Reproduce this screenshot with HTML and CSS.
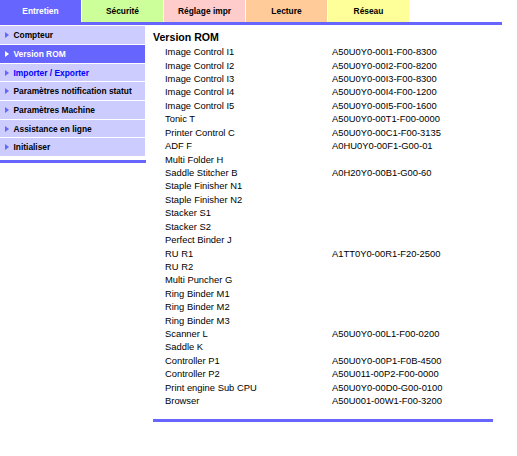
FILE: index.html
```html
<!DOCTYPE html>
<html>
<head>
<meta charset="utf-8">
<link rel="stylesheet" href="styles.css">
</head>
<body>
<div class="tabs">
  <div class="tab t-entretien">Entretien</div>
  <div class="tab t-securite">Sécurité</div>
  <div class="tab t-reglage">Réglage impr</div>
  <div class="tab t-lecture">Lecture</div>
  <div class="tab t-reseau">Réseau</div>
</div>
<div class="topline"></div>
<div class="main">
  <div class="sidebar">
    <div class="menu">
      <div class="item"><span class="arrow"></span>Compteur</div>
      <div class="item selected"><span class="arrow"></span>Version ROM</div>
      <div class="item link"><span class="arrow"></span>Importer / Exporter</div>
      <div class="item"><span class="arrow"></span>Paramètres notification statut</div>
      <div class="item"><span class="arrow"></span>Paramètres Machine</div>
      <div class="item"><span class="arrow"></span>Assistance en ligne</div>
      <div class="item"><span class="arrow"></span>Initialiser</div>
    </div>
    <div class="sideline"></div>
  </div>
  <div class="content">
    <h1 class="title">Version ROM</h1>
    <table class="rom">
      <tr><td class="name">Image Control I1</td><td>A50U0Y0-00I1-F00-8300</td></tr>
      <tr><td class="name">Image Control I2</td><td>A50U0Y0-00I2-F00-8200</td></tr>
      <tr><td class="name">Image Control I3</td><td>A50U0Y0-00I3-F00-8300</td></tr>
      <tr><td class="name">Image Control I4</td><td>A50U0Y0-00I4-F00-1200</td></tr>
      <tr><td class="name">Image Control I5</td><td>A50U0Y0-00I5-F00-1600</td></tr>
      <tr><td class="name">Tonic T</td><td>A50U0Y0-00T1-F00-0000</td></tr>
      <tr><td class="name">Printer Control C</td><td>A50U0Y0-00C1-F00-3135</td></tr>
      <tr><td class="name">ADF F</td><td>A0HU0Y0-00F1-G00-01</td></tr>
      <tr><td class="name">Multi Folder H</td><td></td></tr>
      <tr><td class="name">Saddle Stitcher B</td><td>A0H20Y0-00B1-G00-60</td></tr>
      <tr><td class="name">Staple Finisher N1</td><td></td></tr>
      <tr><td class="name">Staple Finisher N2</td><td></td></tr>
      <tr><td class="name">Stacker S1</td><td></td></tr>
      <tr><td class="name">Stacker S2</td><td></td></tr>
      <tr><td class="name">Perfect Binder J</td><td></td></tr>
      <tr><td class="name">RU R1</td><td>A1TT0Y0-00R1-F20-2500</td></tr>
      <tr><td class="name">RU R2</td><td></td></tr>
      <tr><td class="name">Multi Puncher G</td><td></td></tr>
      <tr><td class="name">Ring Binder M1</td><td></td></tr>
      <tr><td class="name">Ring Binder M2</td><td></td></tr>
      <tr><td class="name">Ring Binder M3</td><td></td></tr>
      <tr><td class="name">Scanner L</td><td>A50U0Y0-00L1-F00-0200</td></tr>
      <tr><td class="name">Saddle K</td><td></td></tr>
      <tr><td class="name">Controller P1</td><td>A50U0Y0-00P1-F0B-4500</td></tr>
      <tr><td class="name">Controller P2</td><td>A50U011-00P2-F00-0000</td></tr>
      <tr><td class="name">Print engine Sub CPU</td><td>A50U0Y0-00D0-G00-0100</td></tr>
      <tr><td class="name">Browser</td><td>A50U001-00W1-F00-3200</td></tr>
    </table>
    <div class="bottomline"></div>
  </div>
</div>
</body>
</html>
```

FILE: styles.css
```css
body {
  margin: 0;
  background: #ffffff;
  font-family: "Liberation Sans", Arial, sans-serif;
  color: #000000;
}

.tabs {
  display: flex;
  height: 22px;
}

.tab {
  width: 81px;
  margin-right: 1px;
  font-size: 8.4px;
  font-weight: bold;
  display: flex;
  align-items: center;
  justify-content: center;
  color: #000000;
}

.t-entretien { background: #6666ff; color: #ffffff; }
.t-securite { background: #ccff99; }
.t-reglage { background: #ffcccc; }
.t-lecture { background: #ffcc99; }
.t-reseau { background: #ffff99; }

.topline {
  width: 502px;
  height: 3px;
  background: #6666ff;
}

.main {
  display: flex;
  align-items: flex-start;
}

.sidebar {
  width: 146px;
  padding-top: 1.3px;
}

.menu {
  display: flex;
  flex-direction: column;
  gap: 1px;
  width: 145px;
}

.item {
  height: 17.7px;
  background: #ccccff;
  font-size: 8.4px;
  font-weight: bold;
  display: flex;
  align-items: center;
  color: #000000;
}

.item .arrow {
  width: 0;
  height: 0;
  border-left: 4.5px solid #6666ff;
  border-top: 3px solid transparent;
  border-bottom: 3px solid transparent;
  margin-left: 5px;
  margin-right: 4.5px;
}

.item.selected {
  background: #6666ff;
  color: #ffffff;
}

.item.selected .arrow {
  border-left-color: #ffffff;
}

.item.link {
  color: #0000ff;
}

.sideline {
  margin-top: 3.5px;
  width: 146px;
  height: 3px;
  background: #6666ff;
}

.content {
  margin-left: 7px;
  padding-top: 5.7px;
  width: 340px;
}

.title {
  margin: 0 0 1.5px 0;
  font-size: 10.6px;
  line-height: 13px;
  font-weight: bold;
  color: #000000;
}

.rom {
  border-collapse: collapse;
  margin-left: 12px;
  font-size: 9.4px;
}

.rom td {
  padding: 0;
  height: 13.42px;
  line-height: 13.42px;
  white-space: nowrap;
  color: #000000;
}

.rom td.name {
  width: 167px;
}

.bottomline {
  margin-top: 11px;
  width: 340px;
  height: 3px;
  background: #6666ff;
}
```
